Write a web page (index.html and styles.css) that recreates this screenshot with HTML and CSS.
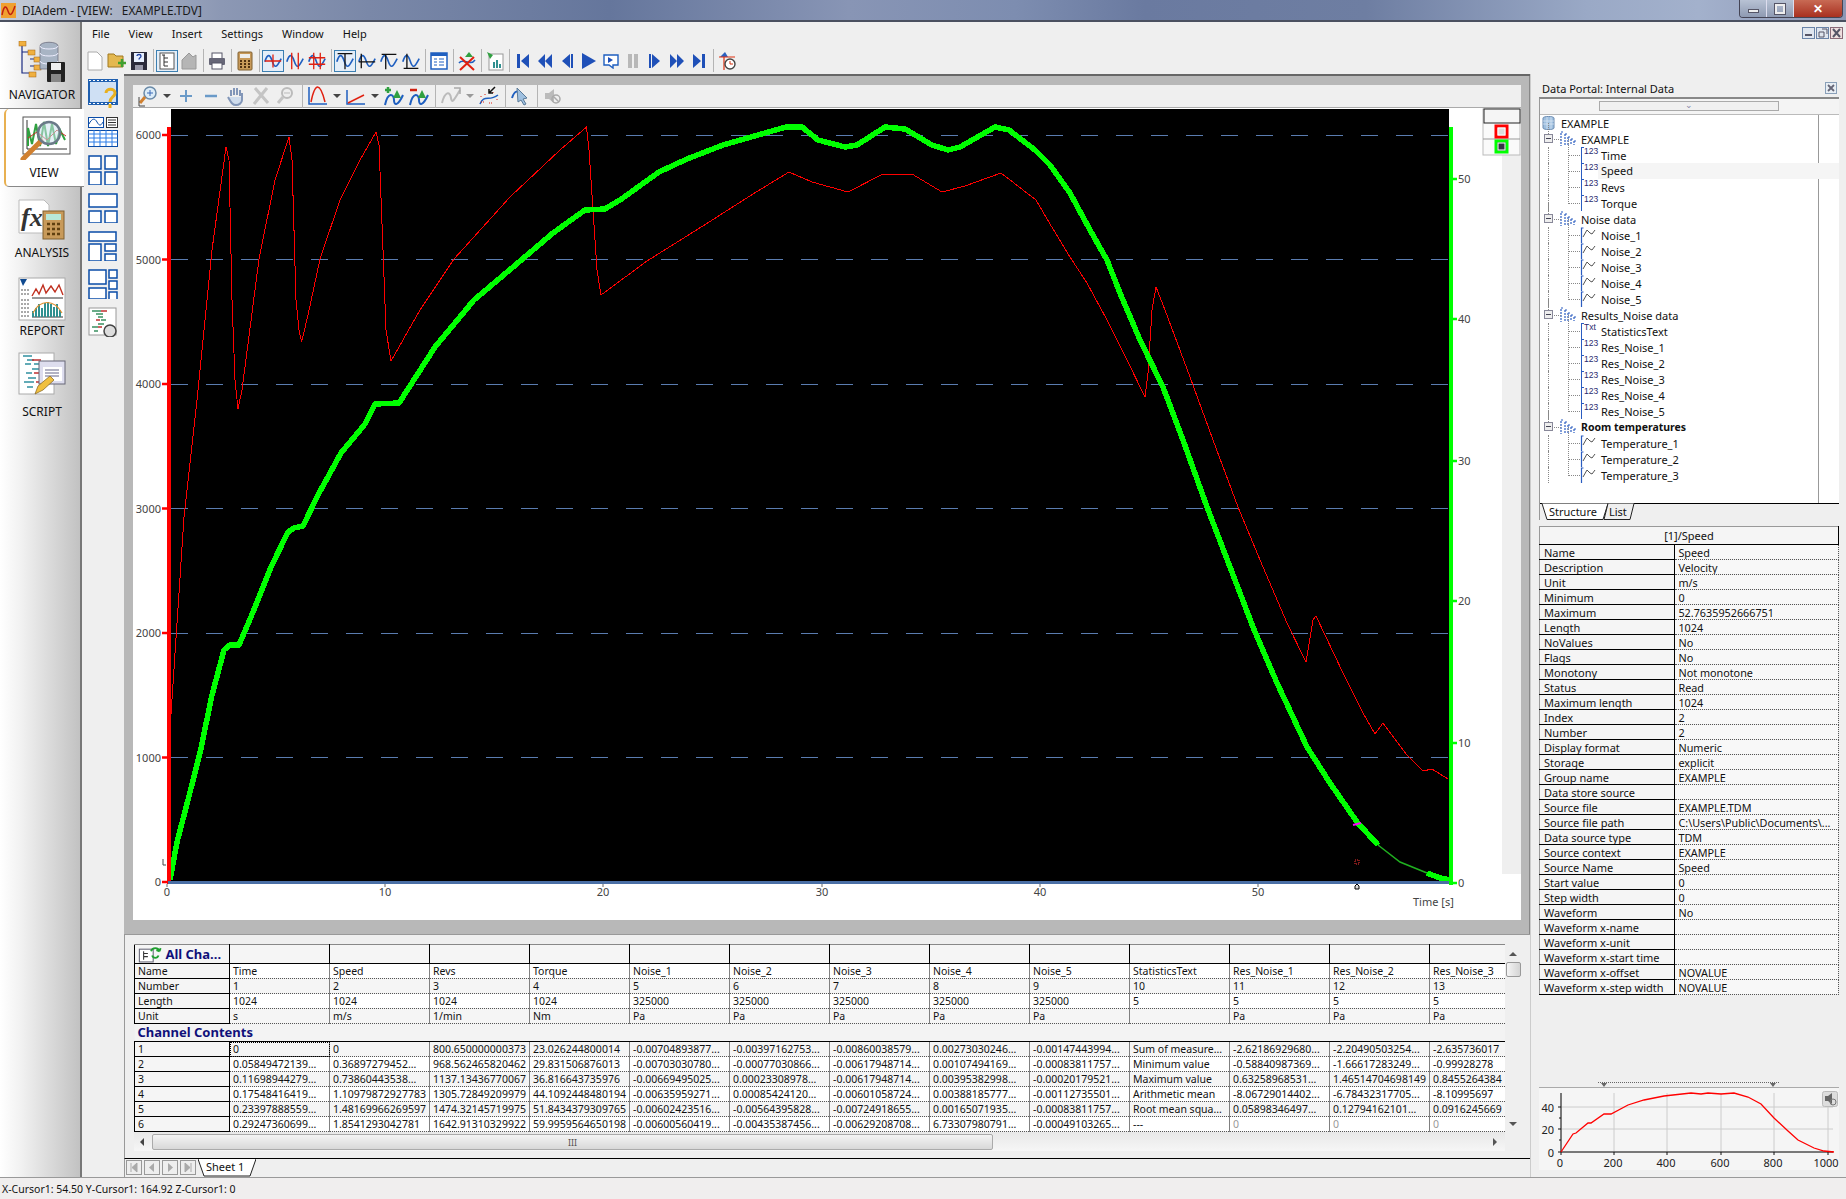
FILE: index.html
```html
<!DOCTYPE html>
<html>
<head>
    <title>DIAdem - [VIEW: EXAMPLE.TDV]</title>
    <link rel="stylesheet" href="styles.css">
</head>
<body>
    <svg class="defs" width="0" height="0">
        <symbol id="i-wave" viewBox="0 0 17 17">
            <path d="M3.500 1H1.500V16" fill="none" stroke="#2a5cc0" stroke-width="1.200"/>
            <path d="M3 10L7 3L10 6L12 7L15 3" fill="none" stroke="#555" stroke-width="1"/>
        </symbol>
        <symbol id="i-group" viewBox="0 0 16 16">
            <path d="M3 1H1V15M5 3V14M8 6V14M8 6H10M11 8V14M11 8H13M14 10V14M14 10H16M5 3H7" fill="none" stroke="#2a5cc0" stroke-width="1.200" stroke-dasharray="2 1"/>
        </symbol>
        <symbol id="i-wave-tool" viewBox="0 0 22 22">
            <path d="M1 12C4 2 7 2 10 11S15 20 21 8" fill="none" stroke="#1f5fc0" stroke-width="2"/>
        </symbol>
    </svg>

    <div class="titlebar">
        <svg class="app-icon" width="15" height="15" viewBox="0 0 15 15"><rect width="15" height="15" fill="#f0a030"/><path d="M1 12C3 2 5 2 7 8S11 12 14 3" fill="none" stroke="#c02010" stroke-width="1.500"/></svg>
        <span class="app-title">DIAdem - [VIEW:   EXAMPLE.TDV]</span>
        <div class="win-buttons">
            <div class="win-btn"><span class="win-min"></span></div>
            <div class="win-btn"><span class="win-max"></span></div>
            <div class="win-btn win-close">✕</div>
        </div>
    </div>

    <div class="app">
        <nav class="sidebar">
            <div class="nav-item nav-first">
                <svg width="48" height="44" viewBox="0 0 48 44">
                    <path d="M4 3V32H14M4 11H12M12 18H20M12 25H20" fill="none" stroke="#1a2a80" stroke-width="1.200"/>
                    <rect x="1" y="0" width="7" height="5" fill="#f0b040" stroke="#a06010" stroke-width=".5"/>
                    <rect x="10" y="9" width="7" height="5" fill="#f0b040" stroke="#a06010" stroke-width=".5"/>
                    <rect x="16" y="16" width="7" height="5" fill="#f0b040" stroke="#a06010" stroke-width=".5"/>
                    <rect x="16" y="24" width="7" height="5" fill="#f0b040" stroke="#a06010" stroke-width=".5"/>
                    <rect x="11" y="31" width="7" height="5" fill="#f0b040" stroke="#a06010" stroke-width=".5"/>
                    <path d="M22 5C22 0 40 0 40 5V28H22Z" fill="#a8b4c4" stroke="#667" stroke-width=".7"/>
                    <path d="M22 5C22 9 40 9 40 5M22 12C22 16 40 16 40 12M22 20C22 24 40 24 40 20" fill="none" stroke="#eef" stroke-width="1"/>
                    <rect x="29" y="21" width="18" height="20" rx="1" fill="#222"/>
                    <rect x="33" y="22" width="10" height="7" fill="#eee"/>
                    <rect x="33" y="33" width="10" height="8" fill="#888"/>
                </svg>
                <span>NAVIGATOR</span>
            </div>
            <div class="nav-item nav-active">
                <svg width="54" height="44" viewBox="0 0 54 44">
                    <rect x="6" y="1" width="47" height="37" fill="#fff" stroke="#555"/>
                    <path d="M10 4V33H50" fill="none" stroke="#333"/>
                    <path d="M11 30V12L15 28L19 8L23 30L27 6L31 30L35 8L39 28L43 14L48 24" fill="none" stroke="#30a040" stroke-width="2"/>
                    <path d="M11 22L20 16L30 24L40 14L49 20" fill="none" stroke="#c03020" stroke-width="1"/>
                    <path d="M24 25L6 43" stroke="#d08030" stroke-width="5" stroke-linecap="round"/>
                    <circle cx="32" cy="17" r="11" fill="#cfe4f0" fill-opacity=".55" stroke="#6a7a88" stroke-width="2.500"/>
                </svg>
                <span>VIEW</span>
            </div>
            <div class="nav-item">
                <svg width="48" height="44" viewBox="0 0 48 44">
                    <path d="M1 1H26L31 6V34H1Z" fill="#fff" stroke="#bbb"/>
                    <text x="3" y="27" class="ic-fx">fx</text>
                    <rect x="25" y="12" width="21" height="28" fill="#c89a5a" stroke="#806030"/>
                    <rect x="28" y="15" width="15" height="6" fill="#b8e8d8"/>
                    <path d="M29 25h3M34 25h3M39 25h3M29 30h3M34 30h3M39 30h3M29 35h3M34 35h3M39 35h3" stroke="#604010" stroke-width="2.500"/>
                </svg>
                <span>ANALYSIS</span>
            </div>
            <div class="nav-item">
                <svg width="48" height="44" viewBox="0 0 48 44">
                    <rect x="1" y="1" width="46" height="42" fill="#fff" stroke="#aaa"/>
                    <path d="M2 2H9L5 9Z" fill="#104a90"/>
                    <path d="M3 13H11M3 17H11M3 23H11M3 27H11M3 31H11M3 35H11M3 39H11" stroke="#555" stroke-dasharray="2 1"/>
                    <path d="M14 19L18 12L21 17L25 8L28 16L33 9L37 15L41 8L45 18" fill="none" stroke="#c03020" stroke-width="1.400"/>
                    <path d="M14 21H45M14 40H45" stroke="#333"/>
                    <path d="M15 40v-6M18 40v-9M21 40v-13M24 40v-9M27 40v-14M30 40v-15M33 40v-13M36 40v-10M39 40v-13M42 40v-7" stroke="#309090" stroke-width="2"/>
                    <path d="M15 36C22 22 36 22 44 36" fill="none" stroke="#e09030" stroke-width="1.200"/>
                </svg>
                <span>REPORT</span>
            </div>
            <div class="nav-item nav-script">
                <svg width="48" height="44" viewBox="0 0 48 44">
                    <rect x="1" y="1" width="35" height="41" fill="#fff" stroke="#aaa"/>
                    <path d="M5 4h9M9 8h7M16 12h12M7 12h6M14 17h10M8 21h6M10 26h8M6 30h10M9 35h6" stroke="#3090a0" stroke-width="1.500"/>
                    <path d="M14 8h9M16 21h8M18 30h6" stroke="#c03030" stroke-width="1.500"/>
                    <rect x="21" y="9" width="26" height="23" fill="#dde" stroke="#667"/>
                    <rect x="25" y="15" width="19" height="14" fill="#fff"/>
                    <path d="M27 18h14M27 21h14M27 24h14" stroke="#668"/>
                    <path d="M17 42L20 34L32 24L36 28L25 38Z" fill="#f0c040" stroke="#806020" stroke-width=".7"/>
                </svg>
                <span>SCRIPT</span>
            </div>
        </nav>

        <div class="workspace">
            <div class="menubar">
                <span>File</span><span>View</span><span>Insert</span><span>Settings</span><span>Window</span><span>Help</span>
                <div class="mdi-buttons">
                    <svg width="41" height="12" viewBox="0 0 41 12">
                        <rect x=".5" y=".5" width="12" height="11" fill="#dfe6ef" stroke="#6a84a8"/><path d="M3 8h7" stroke="#556" stroke-width="2"/>
                        <rect x="14.500" y=".5" width="12" height="11" fill="#dfe6ef" stroke="#6a84a8"/><path d="M17 5h5v5h-5zM20 2h5v5" fill="none" stroke="#556"/>
                        <rect x="28.500" y=".5" width="12" height="11" fill="#efdede" stroke="#8a6a78"/><path d="M31 2l7 8M38 2l-7 8" stroke="#556" stroke-width="2"/>
                    </svg>
                </div>
            </div>

            <div class="toolbar">
                <div class="tb"><svg width="16" height="20" viewBox="0 0 16 20"><path d="M1 1H10L15 6V19H1Z" fill="#fff" stroke="#aaa"/></svg></div>
                <div class="tb"><svg width="20" height="20" viewBox="0 0 20 20"><path d="M1 3H7L9 5H16V16H1Z" fill="#e4b850" stroke="#a07820"/><path d="M11 12h8M15 8v8" stroke="#40a030" stroke-width="2.500"/></svg></div>
                <div class="tb"><svg width="18" height="20" viewBox="0 0 18 20"><rect x="1" y="1" width="16" height="18" fill="#2a2a3a"/><rect x="4" y="2" width="10" height="9" fill="#e8f0ff"/><path d="M7 5C7 3 11 3 11 5C11 7 9 6.500 9 8.500" fill="none" stroke="#2040a0" stroke-width="1.300"/><rect x="5" y="14" width="8" height="5" fill="#99a"/></svg></div>
                <i class="tb-sep"></i>
                <div class="tb on"><svg width="16" height="18" viewBox="0 0 16 18"><rect x="1" y="1" width="14" height="16" fill="#fff" stroke="#555"/><path d="M5 3V14M5 6H9M5 10H9M5 14H9M3 3H6" stroke="#333"/></svg></div>
                <div class="tb"><svg width="18" height="20" viewBox="0 0 18 20"><path d="M2 18V9L9 2L13 6L16 4V18Z" fill="#b5b5b5" stroke="#999"/></svg></div>
                <i class="tb-sep"></i>
                <div class="tb"><svg width="18" height="18" viewBox="0 0 18 18"><rect x="4" y="1" width="10" height="6" fill="#fff" stroke="#556"/><rect x="1" y="6" width="16" height="7" rx="1" fill="#667"/><rect x="4" y="11" width="10" height="6" fill="#fff" stroke="#556"/></svg></div>
                <i class="tb-sep"></i>
                <div class="tb"><svg width="16" height="20" viewBox="0 0 16 20"><rect x="1" y="1" width="14" height="18" rx="1" fill="#c89a5a" stroke="#806030"/><rect x="3" y="3" width="10" height="4" fill="#eee"/><path d="M3 10h2M7 10h2M11 10h2M3 13h2M7 13h2M11 13h2M3 16h2M7 16h2M11 16h2" stroke="#503010" stroke-width="2"/></svg></div>
                <i class="tb-sep"></i>
                <div class="tb on"><svg width="18" height="18" viewBox="0 0 22 22"><use href="#i-wave-tool"/><path d="M11 3V19M1 11H21" stroke="#e02010" stroke-width="1.600"/></svg></div>
                <div class="tb"><svg width="18" height="18" viewBox="0 0 22 22"><use href="#i-wave-tool"/><path d="M7 1V21M15 1V21" stroke="#e02010" stroke-width="1.600"/></svg></div>
                <div class="tb"><svg width="18" height="18" viewBox="0 0 22 22"><use href="#i-wave-tool"/><path d="M7 1V21M15 1V21M1 7H21M1 15H21" stroke="#e02010" stroke-width="1.600"/></svg></div>
                <i class="tb-sep"></i>
                <div class="tb on"><svg width="18" height="18" viewBox="0 0 22 22"><use href="#i-wave-tool"/><path d="M2 2H20M11 2V21" stroke="#111" stroke-width="1.600"/></svg></div>
                <div class="tb"><svg width="18" height="18" viewBox="0 0 22 22"><use href="#i-wave-tool"/><path d="M4 2V20M1 12H21" stroke="#111" stroke-width="1.600"/></svg></div>
                <div class="tb"><svg width="18" height="18" viewBox="0 0 22 22"><use href="#i-wave-tool"/><path d="M2 3H20M7 3V21" stroke="#111" stroke-width="1.600"/></svg></div>
                <div class="tb"><svg width="18" height="18" viewBox="0 0 22 22"><use href="#i-wave-tool"/><path d="M2 20H20M6 2V20" stroke="#111" stroke-width="1.600"/></svg></div>
                <i class="tb-sep"></i>
                <div class="tb"><svg width="18" height="18" viewBox="0 0 18 18"><rect x="1" y="1" width="16" height="16" fill="#fff" stroke="#1f5fc0" stroke-width="1.500"/><rect x="1" y="1" width="16" height="3" fill="#1f5fc0"/><path d="M4 7h3M9 7h5M4 10h3M9 10h5M4 13h3M9 13h5" stroke="#1f5fc0"/></svg></div>
                <i class="tb-sep"></i>
                <div class="tb"><svg width="18" height="20" viewBox="0 0 18 20"><path d="M11 1l4 5h-8z" fill="#30a040"/><path d="M1 12C5 6 12 16 17 9" fill="none" stroke="#1f5fc0" stroke-width="1.500"/><path d="M2 6L16 19M16 6L2 19" stroke="#e02010" stroke-width="2"/></svg></div>
                <i class="tb-sep"></i>
                <div class="tb"><svg width="18" height="20" viewBox="0 0 18 20"><rect x="3" y="3" width="14" height="16" fill="#fff" stroke="#999"/><path d="M8 17v-6M11 17v-8M14 17v-4" stroke="#309090" stroke-width="2"/><path d="M1 1L7 4L4 8Z" fill="#30a040"/></svg></div>
                <i class="tb-sep"></i>
                <div class="tb"><svg width="14" height="16" viewBox="0 0 14 16"><path d="M1 1h3v14H1zM13 1v14L5 8z" class="ic-play"/></svg></div>
                <div class="tb"><svg width="16" height="16" viewBox="0 0 16 16"><path d="M8 1v14L1 8zM15 1v14L8 8z" class="ic-play"/></svg></div>
                <div class="tb"><svg width="14" height="16" viewBox="0 0 14 16"><path d="M10 1v14L2 8zM11 1h2v14h-2z" class="ic-play"/></svg></div>
                <div class="tb"><svg width="16" height="16" viewBox="0 0 16 16"><path d="M1 0v16L15 8z" class="ic-play"/></svg></div>
                <div class="tb"><svg width="16" height="16" viewBox="0 0 16 16"><path d="M1 2H15V12H10V15L6 12H1Z" fill="#fff" stroke="#1f5fc0" stroke-width="1.400"/><path d="M5 4v6l5-3z" class="ic-play"/></svg></div>
                <div class="tb"><svg width="12" height="16" viewBox="0 0 12 16"><path d="M1 1h4v14H1zM7 1h4v14H7z" fill="#b8b8b8"/></svg></div>
                <div class="tb"><svg width="14" height="16" viewBox="0 0 14 16"><path d="M1 1h2v14H1zM4 1v14L12 8z" class="ic-play"/></svg></div>
                <div class="tb"><svg width="16" height="16" viewBox="0 0 16 16"><path d="M1 1v14L8 8zM8 1v14L15 8z" class="ic-play"/></svg></div>
                <div class="tb"><svg width="14" height="16" viewBox="0 0 14 16"><path d="M1 1v14L9 8zM10 1h3v14h-3z" class="ic-play"/></svg></div>
                <i class="tb-sep"></i>
                <div class="tb"><svg width="18" height="20" viewBox="0 0 18 20"><path d="M2 6L7 1L10 6Z" fill="#2a60c0"/><path d="M6 6V19M1 6H17" stroke="#e03010" stroke-width="1.200"/><circle cx="12" cy="13" r="5" fill="#fff" stroke="#444" stroke-width="1.400"/><path d="M12 10v3h3" fill="none" stroke="#d03010"/></svg></div>
            </div>

            <div class="content">
                <div class="tool-col">
                    <svg width="30" height="30" viewBox="0 0 30 30"><rect x="0" y="0" width="30" height="26" fill="#2060b0"/><rect x="2" y="3" width="26" height="20" fill="#cfe0f4"/><path d="M1 1.500h28M1 24.500h28" stroke="#fff" stroke-dasharray="2 2"/><path d="M18 14C18 9 27 9 27 14C27 18 22 18 22 23" fill="none" stroke="#e8b020" stroke-width="3"/><rect x="20.500" y="25" width="3" height="4" fill="#e8b020"/></svg>
                    <svg width="30" height="30" viewBox="0 0 30 30"><rect x=".5" y=".5" width="15" height="10" fill="#fff" stroke="#0a4ca8"/><path d="M1 7C4 1 7 1 9 5S13 9 15 5" fill="none" stroke="#0a4ca8"/><rect x="18.500" y=".5" width="11" height="10" fill="#fff" stroke="#333"/><path d="M20 3h8M20 5.500h8M20 8h8" stroke="#333"/><rect x=".5" y="13.500" width="29" height="16" fill="#fff" stroke="#0a4ca8"/><path d="M.5 17h29M.5 21h29M.5 25h29M6 13v16M12 13v16M18 13v16M24 13v16" stroke="#2a7ce8"/></svg>
                    <svg width="30" height="30" viewBox="0 0 30 30"><g class="ic-pane"><rect x="1" y="1" width="12" height="13"/><rect x="17" y="1" width="12" height="13"/><rect x="1" y="17" width="12" height="13"/><rect x="17" y="17" width="12" height="13"/></g></svg>
                    <svg width="30" height="30" viewBox="0 0 30 30"><g class="ic-pane"><rect x="1" y="1" width="28" height="13"/><rect x="1" y="18" width="12" height="12"/><rect x="17" y="18" width="12" height="12"/></g></svg>
                    <svg width="30" height="30" viewBox="0 0 30 30"><g class="ic-pane"><rect x="1" y="1" width="27" height="9"/><rect x="1" y="13" width="12" height="17"/><rect x="17" y="13" width="11" height="7"/><rect x="17" y="23" width="11" height="7"/></g></svg>
                    <svg width="30" height="30" viewBox="0 0 30 30"><g class="ic-pane"><rect x="1" y="1" width="17" height="14"/><rect x="21" y="1" width="8" height="8"/><rect x="21" y="12" width="8" height="8"/><rect x="1" y="19" width="17" height="11"/><rect x="21" y="23" width="8" height="8"/></g></svg>
                    <svg width="30" height="30" viewBox="0 0 30 30"><rect x="1" y="1" width="27" height="27" fill="#fff" stroke="#999"/><path d="M4 4h9M8 7h7M10 10h5M13 13h5M10 17h6M4 20h6M6 24h4" stroke="#3a9060" stroke-width="1.300"/><path d="M13 4h6M12 13h-4M10 20h4" stroke="#c03030" stroke-width="1.300"/><circle cx="22" cy="24" r="6" fill="#ddd" stroke="#444" stroke-width="1.500"/></svg>
                </div>

                <div class="sheet">
                    <div class="chart-pane">
                        <div class="chart-tools">
                            <div class="ct"><svg width="22" height="22" viewBox="0 0 22 22"><circle cx="13" cy="8" r="6" fill="#dcecf8" stroke="#6a8aa8" stroke-width="1.500"/><path d="M13 5v6M10 8h6" stroke="#3a6ab8"/><path d="M8 12L3 18" stroke="#d08030" stroke-width="3"/><path d="M2 12v9M2 21h6" stroke="#444"/></svg></div>
                            <i class="dd"></i>
                            <div class="ct"><svg width="14" height="14" viewBox="0 0 14 14"><path d="M7 1V13M1 7H13" stroke="#6a9ac8" stroke-width="2"/></svg></div>
                            <div class="ct"><svg width="14" height="14" viewBox="0 0 14 14"><path d="M1 7H13" stroke="#6a9ac8" stroke-width="2.500"/></svg></div>
                            <div class="ct"><svg width="18" height="20" viewBox="0 0 18 20"><path d="M4 10V4M7 9V2M10 9V2M13 10V4M15 11V7L15 14C15 17 12 19 9 19C5 19 4 16 1 11" fill="#cfdcec" stroke="#8296b8" stroke-width="2"/></svg></div>
                            <div class="ct"><svg width="20" height="20" viewBox="0 0 20 20"><path d="M4 2L17 17M16 2L3 18" stroke="#c4c4c4" stroke-width="3"/></svg></div>
                            <div class="ct"><svg width="20" height="20" viewBox="0 0 20 20"><circle cx="11" cy="7" r="5" fill="#eee" stroke="#bbb" stroke-width="2"/><path d="M7 11L2 17" stroke="#c4c4c4" stroke-width="3"/><path d="M8 7h6" stroke="#bbb"/></svg></div>
                            <i class="tb-sep"></i>
                            <div class="ct"><svg width="20" height="20" viewBox="0 0 20 20"><path d="M1 1V18H19" fill="none" stroke="#1f5fc0" stroke-width="1.500"/><path d="M3 16C7 -4 12 -4 17 16" fill="none" stroke="#e02010" stroke-width="1.500"/></svg></div>
                            <i class="dd"></i>
                            <div class="ct"><svg width="20" height="20" viewBox="0 0 20 20"><path d="M1 4V18H19" fill="none" stroke="#1f5fc0" stroke-width="1.500"/><path d="M2 17L18 9" stroke="#e02010" stroke-width="1.500"/></svg></div>
                            <i class="dd"></i>
                            <div class="ct"><svg width="20" height="20" viewBox="0 0 20 20"><path d="M1 19C4 5 10 8 10 14S14 20 19 9" fill="none" stroke="#1f5fc0" stroke-width="2"/><path d="M9 12L13 4L17 12Z" fill="#30a040"/><path d="M1 4H7M4 1V7" stroke="#30a040" stroke-width="2.500"/></svg></div>
                            <div class="ct"><svg width="20" height="20" viewBox="0 0 20 20"><path d="M1 19C4 5 10 8 10 14S14 20 19 9" fill="none" stroke="#1f5fc0" stroke-width="2"/><path d="M9 12L13 4L17 12Z" fill="#30a040"/><path d="M1 4H8" stroke="#d02010" stroke-width="2.500"/></svg></div>
                            <i class="tb-sep"></i>
                            <div class="ct"><svg width="20" height="20" viewBox="0 0 20 20"><path d="M1 17C4 5 9 5 10 12S14 12 19 4" fill="none" stroke="#bbb" stroke-width="2"/><path d="M13 2H19V8" fill="none" stroke="#aaa" stroke-width="1.500"/></svg></div>
                            <i class="dd dd-off"></i>
                            <div class="ct"><svg width="20" height="20" viewBox="0 0 20 20"><path d="M1 18C5 8 10 16 19 9" fill="none" stroke="#1f5fc0" stroke-width="1.500"/><path d="M2 10v2M6 8v2M14 6v2M18 13v2M2 16h3M10 17h3" stroke="#e02010" stroke-dasharray="1 1"/><path d="M16 1L10 7M10 3V7H14" fill="none" stroke="#111" stroke-width="1.500"/></svg></div>
                            <i class="tb-sep"></i>
                            <div class="ct"><svg width="20" height="20" viewBox="0 0 20 20"><path d="M1 12C4 3 7 5 10 9" fill="none" stroke="#1f5fc0" stroke-width="2"/><path d="M6 2L16 12L12 13L15 18L13 19L10 14L7 16Z" fill="#9fc0e0" stroke="#5a7a98"/></svg></div>
                            <i class="tb-sep"></i>
                            <div class="ct"><svg width="18" height="18" viewBox="0 0 18 18"><path d="M1 6H5L10 2V16L5 12H1Z" fill="#bbb"/><circle cx="12" cy="12" r="4" fill="none" stroke="#aaa" stroke-width="1.500"/><path d="M9 9L15 15" stroke="#aaa" stroke-width="1.500"/></svg></div>
                        </div>

                        <svg class="chart" width="1388" height="812" viewBox="133 108 1388 812">
                            <rect x="171" y="109" width="1278" height="772" fill="#000"/>
                            <rect x="1502" y="154" width="19" height="720" fill="#efefef"/>
                            <g class="grid-line">
                                <path d="M171 135.500H1449M171 259.500H1449M171 384.500H1449M171 508.500H1449M171 633.500H1449M171 757.500H1449"/>
                            </g>

                            <polyline class="curve-red" points="168,760 184,517 197,400 212,250 226,147 229,160 232,300 235,380 238,409 242,390 259,259 275,180 289,137 292,160 296,300 299,330 301.600,342 308,315 320,259 340,200 360,160 376,132 379,145 383,250 386,330 391,361 420,310 454,259 510,197 560,150 586.500,127 589,150 593,210 597,270 601,295 647,261 706,224 753,194 789,172 812,182 848,192 883,174 912,174 942,192 965,186 1001,173 1036,200 1050,224 1070,257 1087,283 1107,320 1127,360 1145,397 1148,373 1152,310 1156,287 1165,310 1190,377 1213,440 1238,507 1263,567 1287,623 1306,662 1313,620 1316,616 1343,673 1363,713 1375,734 1383,723 1407,755 1423,771 1432,769 1448,779"/>
                            <polyline class="curve-green" points="170,880 177,842 188,800 200,753 212,695 224,650 230,645 239,645 253,612 271,567 288,532 294,528 303,526 318,495 341,453 365,424 375,404 399,403 435,347 474,300 506,273 553,233 585,210 605,209 620,200 659,172 687,159 723,145 786,127 802,127 818,140 845,147 857,145 885,127 905,129 932,145 948,150 960,147 995,127 1009,130 1035,150 1050,165 1070,193 1090,230 1107,260 1120,293 1140,340 1163,387 1183,440 1207,507 1230,567 1253,627 1277,683 1307,747 1330,783 1357,822 1378,845"/>
                            <polyline class="curve-green-thin" points="1378,845 1400,862 1427,873"/>
                            <polyline class="curve-green" points="1427,873 1440,878 1450,880"/>

                            <path d="M1353 825L1361 823" stroke="#f0f" stroke-width="2"/>
                            <rect x="1355" y="860" width="4" height="4" fill="none" stroke="#f33" stroke-dasharray="1 1"/>
                            <path d="M163 859V865H166" fill="none" stroke="#444"/>

                            <rect x="167" y="127" width="4" height="757" fill="#f00"/>
                            <rect x="1449" y="127" width="4" height="758" fill="#0f0"/>
                            <rect x="168" y="881" width="1281" height="3" fill="#4a6fa5"/>
                            <path d="M162 135H167M162 259.500H167M162 384H167M162 508.500H167M162 633H167M162 757.500H167M162 882H167" stroke="#f00" stroke-width="2.500"/>
                            <path d="M1453 179H1457M1453 319H1457M1453 461H1457M1453 601H1457M1453 743H1457M1453 883H1457" stroke="#0f0" stroke-width="2.500"/>
                            <path d="M167 884v3M385 884v3M603 884v3M822 884v3M1040 884v3M1258 884v3" stroke="#666"/>
                            <path d="M1355 889V886L1357 884L1359 886V889Z" fill="#ddd" stroke="#000"/>

                            <g class="axis-left">
                                <text x="161" y="139">6000</text>
                                <text x="161" y="264">5000</text>
                                <text x="161" y="388">4000</text>
                                <text x="161" y="513">3000</text>
                                <text x="161" y="637">2000</text>
                                <text x="161" y="762">1000</text>
                                <text x="161" y="886">0</text>
                            </g>
                            <g class="axis-right">
                                <text x="1458" y="183">50</text>
                                <text x="1458" y="323">40</text>
                                <text x="1458" y="465">30</text>
                                <text x="1458" y="605">20</text>
                                <text x="1458" y="747">10</text>
                                <text x="1458" y="887">0</text>
                            </g>
                            <g class="axis-bottom">
                                <text x="167" y="896">0</text>
                                <text x="385" y="896">10</text>
                                <text x="603" y="896">20</text>
                                <text x="822" y="896">30</text>
                                <text x="1040" y="896">40</text>
                                <text x="1258" y="896">50</text>
                            </g>
                            <text x="1413" y="906" class="axis-name">Time [s]</text>

                            <rect x="1483" y="109" width="37" height="46" fill="#fafafa" stroke="#bbb"/>
                            <rect x="1484" y="109" width="36" height="14" fill="#f5f5f5" stroke="#222"/>
                            <path d="M1483 139H1520" stroke="#999"/>
                            <rect x="1496" y="126" width="11" height="11" fill="#ddd" stroke="#f00" stroke-width="3"/>
                            <rect x="1496" y="141" width="11" height="11" fill="#334" stroke="#0f0" stroke-width="3"/>
                            <rect x="1498" y="143" width="7" height="7" fill="#334" stroke="#fff"/>
                            <rect x="1498" y="128" width="7" height="7" fill="#ddd" stroke="#fff"/>
                        </svg>
                    </div>

                    <div class="grid-pane">
                        <div class="grid-frame">
                            <div class="grid-clip">
                                <table class="grid">
                                    <colgroup><col class="col-head"><col span="13" class="col-data"></colgroup>
                                    <tr class="top-row">
                                        <th class="all-channels">
                                            <svg width="24" height="17" viewBox="0 0 22 16"><rect x="1" y="3" width="13" height="12" fill="#fff" stroke="#667"/><path d="M5 5V13M5 7H9M5 10H9" stroke="#333"/><path d="M12 5C13 1 19 1 20 5M20 5l-3-1M20 5l1-3M19 9C18 12 14 12 13 9" fill="none" stroke="#20a030" stroke-width="1.700"/></svg>
                                            All Cha...
                                        </th>
                                        <td></td><td></td><td></td><td></td><td></td><td></td><td></td><td></td><td></td><td></td><td></td><td></td><td></td>
                                    </tr>
                                    <tr>
                                        <th>Name</th><td>Time</td><td>Speed</td><td>Revs</td><td>Torque</td><td>Noise_1</td><td>Noise_2</td><td>Noise_3</td><td>Noise_4</td><td>Noise_5</td><td>StatisticsText</td><td>Res_Noise_1</td><td>Res_Noise_2</td><td>Res_Noise_3</td>
                                    </tr>
                                    <tr class="alt">
                                        <th>Number</th><td>1</td><td>2</td><td>3</td><td>4</td><td>5</td><td>6</td><td>7</td><td>8</td><td>9</td><td>10</td><td>11</td><td>12</td><td>13</td>
                                    </tr>
                                    <tr>
                                        <th>Length</th><td>1024</td><td>1024</td><td>1024</td><td>1024</td><td>325000</td><td>325000</td><td>325000</td><td>325000</td><td>325000</td><td>5</td><td>5</td><td>5</td><td>5</td>
                                    </tr>
                                    <tr class="alt">
                                        <th>Unit</th><td>s</td><td>m/s</td><td>1/min</td><td>Nm</td><td>Pa</td><td>Pa</td><td>Pa</td><td>Pa</td><td>Pa</td><td></td><td>Pa</td><td>Pa</td><td>Pa</td>
                                    </tr>
                                    <tr class="section-row">
                                        <th colspan="14">Channel Contents</th>
                                    </tr>
                                    <tr class="alt">
                                        <th>1</th><td class="current">0</td><td>0</td><td>800.650000000373</td><td>23.026244800014</td><td>-0.00704893877...</td><td>-0.00397162753...</td><td>-0.00860038579...</td><td>0.00273030246...</td><td>-0.00147443994...</td><td>Sum of measure...</td><td>-2.62186929680...</td><td>-2.20490503254...</td><td>-2.635736017</td>
                                    </tr>
                                    <tr>
                                        <th>2</th><td>0.05849472139...</td><td>0.36897279452...</td><td>968.562465820462</td><td>29.831506876013</td><td>-0.00703030780...</td><td>-0.00077030866...</td><td>-0.00617948714...</td><td>0.00107494169...</td><td>-0.00083811757...</td><td>Minimum value</td><td>-0.58840987369...</td><td>-1.66617283249...</td><td>-0.99928278</td>
                                    </tr>
                                    <tr class="alt">
                                        <th>3</th><td>0.11698944279...</td><td>0.73860443538...</td><td>1137.13436770067</td><td>36.816643735976</td><td>-0.00669495025...</td><td>0.00023308978...</td><td>-0.00617948714...</td><td>0.00395382998...</td><td>-0.00020179521...</td><td>Maximum value</td><td>0.63258968531...</td><td>1.46514704698149</td><td>0.8455264384</td>
                                    </tr>
                                    <tr>
                                        <th>4</th><td>0.17548416419...</td><td>1.10979872927783</td><td>1305.72849209979</td><td>44.1092448480194</td><td>-0.00635959271...</td><td>0.00085424120...</td><td>-0.00601058724...</td><td>0.00388185777...</td><td>-0.00112735501...</td><td>Arithmetic mean</td><td>-8.06729014402...</td><td>-6.78432317705...</td><td>-8.10995697</td>
                                    </tr>
                                    <tr class="alt">
                                        <th>5</th><td>0.23397888559...</td><td>1.48169966269597</td><td>1474.32145719975</td><td>51.8434379309765</td><td>-0.00602423516...</td><td>-0.00564395828...</td><td>-0.00724918655...</td><td>0.00165071935...</td><td>-0.00083811757...</td><td>Root mean squa...</td><td>0.05898346497...</td><td>0.12794162101...</td><td>0.0916245669</td>
                                    </tr>
                                    <tr>
                                        <th>6</th><td>0.29247360699...</td><td>1.8541293042781</td><td>1642.91310329922</td><td>59.9959564650198</td><td>-0.00600560419...</td><td>-0.00435387456...</td><td>-0.00629208708...</td><td>6.73307980791...</td><td>-0.00049103265...</td><td>---</td><td class="muted">0</td><td class="muted">0</td><td class="muted">0</td>
                                    </tr>
                                </table>
                                <div class="hscroll">
                                    <i class="arrow-left"></i>
                                    <div class="hthumb">III</div>
                                    <i class="arrow-right"></i>
                                </div>
                            </div>
                            <div class="vscroll">
                                <i class="arrow-up"></i>
                                <div class="vthumb"></div>
                                <i class="arrow-down"></i>
                            </div>
                        </div>
                    </div>

                    <div class="sheet-tabs">
                        <div class="nav-btns">
                            <svg width="16" height="15" viewBox="0 0 16 15"><rect x=".5" y=".5" width="15" height="14" fill="#eee" stroke="#999"/><path d="M5 3V12M11 3V12L6 7.500Z" fill="#aaa" stroke="#aaa"/></svg>
                            <svg width="16" height="15" viewBox="0 0 16 15"><rect x=".5" y=".5" width="15" height="14" fill="#eee" stroke="#999"/><path d="M10 3V12L5 7.500Z" fill="#aaa"/></svg>
                            <svg width="16" height="15" viewBox="0 0 16 15"><rect x=".5" y=".5" width="15" height="14" fill="#eee" stroke="#999"/><path d="M6 3V12L11 7.500Z" fill="#aaa"/></svg>
                            <svg width="16" height="15" viewBox="0 0 16 15"><rect x=".5" y=".5" width="15" height="14" fill="#eee" stroke="#999"/><path d="M11 3V12M5 3V12L10 7.500Z" fill="#aaa" stroke="#aaa"/></svg>
                        </div>
                        <div class="sheet-tab">
                            <svg width="58" height="18" viewBox="0 0 58 18"><path d="M0 0L6 17H52L58 0" fill="#fff" stroke="#222"/></svg>
                            <span>Sheet 1</span>
                        </div>
                    </div>
                </div>

                <aside class="portal">
                    <div class="portal-title">
                        <span>Data Portal: Internal Data</span>
                        <svg width="12" height="12" viewBox="0 0 12 12"><rect x=".5" y=".5" width="11" height="11" fill="#e8eef4" stroke="#8aa0b8"/><path d="M3 3L9 9M9 3L3 9" stroke="#667" stroke-width="1.800"/></svg>
                    </div>
                    <div class="tree-box">
                        <div class="tree-head"><div class="tree-handle">⌄</div></div>
                        <div class="tree">
                            <div class="tree-root">
                                <svg width="13" height="14" viewBox="0 0 13 14"><path d="M1 2C1 0 12 0 12 2V12C12 14 1 14 1 12Z" fill="#9fc0e0" stroke="#6a8ab0"/><path d="M1 5H12M1 8H12M5 1V13M9 1V13" stroke="#dfe9f5" stroke-width=".7"/></svg>
                                <span>EXAMPLE</span>
                            </div>
                            <div class="t-group"><i class="t-toggle"></i><svg width="16" height="16"><use href="#i-group"/></svg><span>EXAMPLE</span></div>
                            <div class="t-leaf"><b class="t-kind">123</b><span>Time</span></div>
                            <div class="t-leaf t-selected"><b class="t-kind">123</b><span>Speed</span></div>
                            <div class="t-leaf"><b class="t-kind">123</b><span>Revs</span></div>
                            <div class="t-leaf"><b class="t-kind">123</b><span>Torque</span></div>
                            <div class="t-group"><i class="t-toggle"></i><svg width="16" height="16"><use href="#i-group"/></svg><span>Noise data</span></div>
                            <div class="t-leaf"><svg width="17" height="17"><use href="#i-wave"/></svg><span>Noise_1</span></div>
                            <div class="t-leaf"><svg width="17" height="17"><use href="#i-wave"/></svg><span>Noise_2</span></div>
                            <div class="t-leaf"><svg width="17" height="17"><use href="#i-wave"/></svg><span>Noise_3</span></div>
                            <div class="t-leaf"><svg width="17" height="17"><use href="#i-wave"/></svg><span>Noise_4</span></div>
                            <div class="t-leaf"><svg width="17" height="17"><use href="#i-wave"/></svg><span>Noise_5</span></div>
                            <div class="t-group"><i class="t-toggle"></i><svg width="16" height="16"><use href="#i-group"/></svg><span>Results_Noise data</span></div>
                            <div class="t-leaf"><b class="t-kind">Txt</b><span>StatisticsText</span></div>
                            <div class="t-leaf"><b class="t-kind">123</b><span>Res_Noise_1</span></div>
                            <div class="t-leaf"><b class="t-kind">123</b><span>Res_Noise_2</span></div>
                            <div class="t-leaf"><b class="t-kind">123</b><span>Res_Noise_3</span></div>
                            <div class="t-leaf"><b class="t-kind">123</b><span>Res_Noise_4</span></div>
                            <div class="t-leaf"><b class="t-kind">123</b><span>Res_Noise_5</span></div>
                            <div class="t-group t-bold"><i class="t-toggle"></i><svg width="16" height="16"><use href="#i-group"/></svg><span>Room temperatures</span></div>
                            <div class="t-leaf"><svg width="17" height="17"><use href="#i-wave"/></svg><span>Temperature_1</span></div>
                            <div class="t-leaf"><svg width="17" height="17"><use href="#i-wave"/></svg><span>Temperature_2</span></div>
                            <div class="t-leaf"><svg width="17" height="17"><use href="#i-wave"/></svg><span>Temperature_3</span></div>
                        </div>
                        <svg class="tree-tabs" width="299" height="17" viewBox="0 0 299 17">
                            <path d="M0 .5H299" stroke="#000"/>
                            <path d="M2 .5L7 16.500H63L68 .5" fill="#fff" stroke="#222"/>
                            <path d="M68 .5L64 16.500H90L94 .5" fill="#efefef" stroke="#222"/>
                            <text x="9" y="12.500">Structure</text>
                            <text x="69" y="12.500">List</text>
                        </svg>
                    </div>

                    <table class="props">
                        <colgroup><col class="col-prop"><col class="col-val"></colgroup>
                        <tr class="props-head"><th colspan="2">[1]/Speed</th></tr>
                        <tr><th>Name</th><td>Speed</td></tr>
                        <tr><th>Description</th><td>Velocity</td></tr>
                        <tr><th>Unit</th><td>m/s</td></tr>
                        <tr><th>Minimum</th><td>0</td></tr>
                        <tr><th>Maximum</th><td>52.7635952666751</td></tr>
                        <tr><th>Length</th><td>1024</td></tr>
                        <tr><th>NoValues</th><td>No</td></tr>
                        <tr><th>Flags</th><td>No</td></tr>
                        <tr><th>Monotony</th><td>Not monotone</td></tr>
                        <tr><th>Status</th><td>Read</td></tr>
                        <tr><th>Maximum length</th><td>1024</td></tr>
                        <tr><th>Index</th><td>2</td></tr>
                        <tr><th>Number</th><td>2</td></tr>
                        <tr><th>Display format</th><td>Numeric</td></tr>
                        <tr><th>Storage</th><td>explicit</td></tr>
                        <tr><th>Group name</th><td>EXAMPLE</td></tr>
                        <tr><th>Data store source</th><td></td></tr>
                        <tr><th>Source file</th><td>EXAMPLE.TDM</td></tr>
                        <tr><th>Source file path</th><td>C:\Users\Public\Documents\...</td></tr>
                        <tr><th>Data source type</th><td>TDM</td></tr>
                        <tr><th>Source context</th><td>EXAMPLE</td></tr>
                        <tr><th>Source Name</th><td>Speed</td></tr>
                        <tr><th>Start value</th><td>0</td></tr>
                        <tr><th>Step width</th><td>0</td></tr>
                        <tr><th>Waveform</th><td>No</td></tr>
                        <tr><th>Waveform x-name</th><td></td></tr>
                        <tr><th>Waveform x-unit</th><td></td></tr>
                        <tr><th>Waveform x-start time</th><td></td></tr>
                        <tr><th>Waveform x-offset</th><td>NOVALUE</td></tr>
                        <tr><th>Waveform x-step width</th><td>NOVALUE</td></tr>
                    </table>

                    <div class="mini-split"><i></i><i></i></div>

                    <div class="mini-plot">
                        <svg width="300" height="83" viewBox="1538 1087 300 83">
                            <path d="M1560 1092V1151H1832M1613 1092V1151M1666 1092V1151M1720 1092V1151M1773 1092V1151M1827 1092V1151M1560 1106H1832M1560 1128H1832" fill="none" stroke="#ccc"/>
                            <path d="M1560 1092V1151H1832" fill="none" stroke="#111"/>
                            <path d="M1557 1106H1560M1557 1128H1560M1557 1151H1560M1558 1117H1560M1558 1139H1560M1560 1151V1154M1613 1151V1154M1666 1151V1154M1720 1151V1154M1773 1151V1154M1827 1151V1154" stroke="#111"/>
                            <polyline points="1560,1151 1572,1133 1575,1132 1587,1122 1590,1122 1603,1113 1610,1113 1627,1104 1643,1099 1663,1095 1690,1092 1700,1093 1707,1092 1720,1093 1733,1092 1747,1096 1760,1103 1773,1117 1787,1130 1797,1139 1813,1147 1823,1150 1833,1151" fill="none" stroke="#f00" stroke-width="1.300"/>
                            <g class="mini-y">
                                <text x="1553" y="1111">40</text>
                                <text x="1553" y="1133">20</text>
                                <text x="1553" y="1156">0</text>
                            </g>
                            <g class="mini-x">
                                <text x="1559" y="1166">0</text>
                                <text x="1612" y="1166">200</text>
                                <text x="1665" y="1166">400</text>
                                <text x="1719" y="1166">600</text>
                                <text x="1772" y="1166">800</text>
                                <text x="1825" y="1166">1000</text>
                            </g>
                            <rect x="1821.500" y="1090.500" width="15" height="15" rx="2" fill="#ddd" stroke="#bbb"/>
                            <path d="M1824 1095H1827L1831 1092V1103L1827 1100H1824Z" fill="#666"/>
                            <circle cx="1832" cy="1101" r="3" fill="none" stroke="#777"/>
                        </svg>
                    </div>
                </aside>
            </div>
        </div>
    </div>

    <div class="statusbar">X-Cursor1: 54.50 Y-Cursor1: 164.92 Z-Cursor1: 0</div>
</body>
</html>
```

FILE: styles.css
```css
* {
    box-sizing: border-box;
}
html, body {
    margin: 0;
    padding: 0;
}
body {
    width: 1846px;
    height: 1199px;
    overflow: hidden;
    font-family: "Noto Sans", sans-serif;
    font-size: 11px;
    color: #111;
    background: #efefef;
    display: flex;
    flex-direction: column;
}
svg {
    display: block;
    flex: none;
}
.defs {
    position: absolute;
}
.ic-fx {
    font-family: "Liberation Serif", serif;
    font-style: italic;
    font-weight: bold;
    font-size: 26px;
    fill: #333;
}
.ic-play {
    fill: #1f50b8;
}
.ic-pane rect {
    fill: #fff;
    stroke: #0a4ca8;
    stroke-width: 1.5;
}

/* title bar */
.titlebar {
    height: 22px;
    flex: none;
    display: flex;
    align-items: center;
    border-bottom: 2px solid #4a5060;
    background: linear-gradient(90deg, #c6ccd8 0%, #aab3c6 6%, #8c98b4 12%, #7a88a8 20%, #65769c 33%, #8895b5 46%, #7d8db0 55%, #6a7aa0 62%, #6e7ea2 74%, #9aa9c6 86%, #a3b1cc 92%, #8d97b5 100%);
}
.app-icon {
    margin-left: 1px;
}
.app-title {
    margin-left: 6px;
    font-size: 11.800px;
    color: #1a1a1a;
    white-space: pre;
}
.win-buttons {
    margin-left: auto;
    margin-right: 3px;
    display: flex;
    height: 18px;
    align-self: flex-start;
    border: 1px solid #445;
    border-top: none;
    border-radius: 0 0 4px 4px;
    overflow: hidden;
}
.win-btn {
    width: 27px;
    display: flex;
    align-items: center;
    justify-content: center;
    background: linear-gradient(#b8c2d4, #8e9ab2);
    border-right: 1px solid #dde;
}
.win-close {
    width: 48px;
    border-right: none;
    color: #fff;
    font-weight: bold;
    font-size: 12px;
    background: linear-gradient(#c86a54, #a83020);
}
.win-min {
    width: 11px;
    height: 4px;
    margin-top: 5px;
    background: #eee;
    border: 1px solid #556;
}
.win-max {
    width: 10px;
    height: 10px;
    border: 2px solid #eee;
    outline: 1px solid #556;
}

.app {
    flex: 1;
    display: flex;
    min-height: 0;
}

/* left navigator strip */
.sidebar {
    width: 82px;
    flex: none;
    border-right: 2px solid #777;
    background: linear-gradient(90deg, #fff 0%, #f2f2f2 25%, #c2c2c2 100%);
    display: flex;
    flex-direction: column;
}
.nav-item {
    height: 78px;
    padding: 12px 0 0 4px;
    display: flex;
    flex-direction: column;
    align-items: center;
    font-size: 12px;
}
.nav-item svg {
    margin-bottom: 3px;
}
.nav-item span {
    line-height: 14px;
}
.nav-first {
    height: 87px;
    padding-top: 19px;
    border-bottom: 1px solid #888;
}
.nav-active {
    width: 80px;
    margin-left: 4px;
    margin-right: -2px;
    padding: 7px 2px 0 0;
    background: #fff;
    border-left: 2px solid #e8b050;
    border-bottom: 1px solid #888;
    border-radius: 5px 0 0 5px;
}
.nav-active svg {
    margin-bottom: 6px;
}
.nav-script {
    padding-top: 9px;
}
.nav-script svg {
    margin-bottom: 9px;
}

.workspace {
    flex: 1;
    display: flex;
    flex-direction: column;
    min-width: 0;
}
.menubar {
    height: 25px;
    flex: none;
    display: flex;
    align-items: center;
    padding: 0 0 3px 10px;
    gap: 19px;
    font-size: 11px;
}
.mdi-buttons {
    margin-left: auto;
    margin-right: 3px;
    margin-top: -1px;
}

/* main toolbar */
.toolbar {
    height: 27px;
    flex: none;
    display: flex;
    align-items: center;
    padding-left: 2px;
}
.tb {
    width: 22px;
    height: 22px;
    display: flex;
    align-items: center;
    justify-content: center;
}
.tb.on {
    border: 1px solid #3c7fb1;
    background: #e4eef8;
}
.tb-sep {
    width: 1px;
    height: 23px;
    margin: 0 2px 0 3px;
    background: #b4b4b4;
}

.content {
    flex: 1;
    display: flex;
    min-height: 0;
}
.tool-col {
    width: 42px;
    flex: none;
    padding: 5px 0 0 6px;
    display: flex;
    flex-direction: column;
    gap: 8px;
}

/* center sheet */
.sheet {
    width: 1406px;
    flex: none;
    display: flex;
    flex-direction: column;
    border-top: 2px solid #666;
}
.chart-pane {
    height: 858px;
    flex: none;
    padding: 9px 9px 14px;
    background: #b8b8b8;
    border-right: 1px solid #888;
}
.chart-tools {
    width: 1388px;
    height: 23px;
    display: flex;
    align-items: center;
    gap: 1px;
    padding-left: 3px;
    background: #efefef;
    border-bottom: 1px solid #aaa;
}
.ct {
    width: 24px;
    height: 22px;
    display: flex;
    align-items: center;
    justify-content: center;
}
.dd {
    height: 0;
    width: 0;
    border-style: solid;
    border-width: 4px 4px 0;
    border-color: #444 transparent transparent;
    margin: 0 2px;
}
.dd-off {
    border-color: #999 transparent transparent;
}
.chart {
    background: #fff;
}
.grid-line path {
    fill: none;
    stroke: #5a7cb0;
    stroke-width: 1;
    stroke-dasharray: 17 18;
    shape-rendering: crispEdges;
}
.curve-red {
    fill: none;
    stroke: #f00;
    stroke-width: 1;
    shape-rendering: crispEdges;
}
.curve-green {
    fill: none;
    stroke: #0f0;
    stroke-width: 5.500;
    stroke-linejoin: round;
    shape-rendering: crispEdges;
}
.curve-green-thin {
    fill: none;
    stroke: #20b020;
    stroke-width: 1.500;
}
.chart text {
    font-size: 11px;
    fill: #444;
}
.axis-left text {
    text-anchor: end;
}
.axis-bottom text {
    text-anchor: middle;
}

/* channel grid */
.grid-pane {
    height: 224px;
    flex: none;
    padding: 9px 10px 7px 9px;
    border-top: 1px solid #999;
    border-left: 1px solid #999;
}
.grid-frame {
    width: 1387px;
    height: 207px;
    display: flex;
}
.grid-clip {
    width: 1371px;
    flex: none;
    overflow: hidden;
    background: #f0f0f0;
}
.grid {
    width: 1395px;
    table-layout: fixed;
    border-collapse: collapse;
    font-size: 10.500px;
    line-height: 13px;
}
.col-head {
    width: 95px;
}
.col-data {
    width: 100px;
}
.grid th, .grid td {
    height: 15px;
    padding: 0 3px;
    overflow: hidden;
    white-space: nowrap;
    text-align: left;
    font-weight: normal;
}
.grid th {
    background: #f5f5f5;
    border: 1px solid #000;
}
.grid td {
    background: #fff;
    border-right: 1px solid #808080;
    border-bottom: 1px dotted #555;
}
.grid .alt td {
    background: #f5f5f5;
}
.grid .top-row th, .grid .top-row td {
    height: 19px;
    line-height: 12px;
    background: #f5f5f5;
    border: 1px solid #000;
    border-top-color: #888;
}
.all-channels {
    font-size: 13px;
    color: #10107a;
}
.grid .all-channels {
    font-weight: bold;
}
.all-channels svg {
    display: inline-block;
    vertical-align: -4px;
}
.grid .section-row th {
    height: 18px;
    font-size: 13px;
    font-weight: bold;
    color: #10107a;
    background: #f3f3f3;
    border-width: 0 0 1px;
}
.grid .current {
    outline: 1px dotted #000;
    outline-offset: -1px;
}
.grid .muted {
    color: #999;
}
.hscroll {
    height: 19px;
    display: flex;
    align-items: center;
    background: linear-gradient(#e8e8e8, #f6f6f6);
    padding: 0 6px;
}
.hthumb {
    width: 841px;
    height: 16px;
    margin-left: 8px;
    text-align: center;
    line-height: 16px;
    font-size: 9px;
    color: #555;
    border: 1px solid #aaa;
    border-radius: 2px;
    background: linear-gradient(#f4f4f4, #d8d8d8);
}
.arrow-left {
    border-style: solid;
    border-width: 4px 4px 4px 0;
    border-color: transparent #444 transparent transparent;
}
.arrow-right {
    margin-left: auto;
    margin-right: 2px;
    border-style: solid;
    border-width: 4px 0 4px 4px;
    border-color: transparent transparent transparent #555;
}
.vscroll {
    width: 16px;
    flex: none;
    height: 188px;
    display: flex;
    flex-direction: column;
    align-items: center;
    padding-top: 8px;
    background: #efefef;
}
.arrow-up {
    border-style: solid;
    border-width: 0 4px 4px;
    border-color: transparent transparent #555;
}
.arrow-down {
    margin-top: auto;
    margin-bottom: 6px;
    border-style: solid;
    border-width: 4px 4px 0;
    border-color: #555 transparent transparent;
}
.vthumb {
    width: 15px;
    height: 15px;
    margin-top: 6px;
    border: 1px solid #999;
    border-radius: 2px;
    background: linear-gradient(90deg, #f4f4f4, #d4d4d4);
}

/* sheet tabs */
.sheet-tabs {
    flex: 1;
    display: flex;
    align-items: flex-start;
    gap: 2px;
    padding-left: 1px;
    border-top: 1px solid #000;
    border-left: 1px solid #999;
}
.nav-btns {
    display: flex;
    gap: 2px;
    padding-top: 1px;
}
.sheet-tab {
    position: relative;
    width: 58px;
    height: 18px;
    font-size: 11px;
}
.sheet-tab span {
    position: absolute;
    left: 8px;
    top: 0;
    line-height: 16px;
}

/* data portal */
.portal {
    flex: 1;
    min-width: 0;
    padding-left: 8px;
    display: flex;
    flex-direction: column;
    border-left: 1px solid #ccc;
}
.portal-title {
    height: 23px;
    flex: none;
    width: 298px;
    display: flex;
    align-items: center;
    justify-content: space-between;
    padding: 5px 0 0 3px;
}
.tree-box {
    width: 300px;
    height: 423px;
    flex: none;
    display: flex;
    flex-direction: column;
    border-top: 2px solid #888;
    border-left: 1px solid #999;
}
.tree-head {
    height: 16px;
    flex: none;
    padding: 2px 0 0 59px;
    border-bottom: 1px solid #bbb;
    background: #f4f4f4;
}
.tree-handle {
    width: 180px;
    height: 10px;
    border: 1px solid #aaa;
    background: #f0f0f0;
    text-align: center;
    font-size: 9px;
    line-height: 5px;
    color: #88a;
}
.tree {
    height: 388px;
    flex: none;
    background: linear-gradient(90deg, #fff 278px, #999 278px, #999 279px, #fff 279px);
}
.tree-root, .t-group, .t-leaf {
    position: relative;
    height: 16px;
    display: flex;
    align-items: center;
    gap: 5px;
}
.tree-root {
    padding-left: 2px;
    gap: 6px;
}
.t-group {
    padding-left: 20px;
}
.t-leaf {
    padding-left: 40px;
    gap: 4px;
}
.t-group::before, .t-leaf::before {
    content: "";
    position: absolute;
    top: -8px;
    height: 16px;
    border-left: 1px dotted #888;
    border-bottom: 1px dotted #888;
}
.t-group::before {
    left: 8px;
    width: 12px;
}
.t-leaf::before {
    left: 28px;
    width: 11px;
}
.t-leaf::after {
    content: "";
    position: absolute;
    left: 8px;
    top: 0;
    height: 16px;
    border-left: 1px dotted #888;
}
.t-toggle {
    position: absolute;
    left: 4px;
    top: 3px;
    width: 9px;
    height: 9px;
    border: 1px solid #889;
    background: linear-gradient(#445, #445) center / 5px 1px no-repeat, #eee;
}
.t-kind {
    width: 17px;
    height: 16px;
    flex: none;
    padding-left: 4px;
    font-family: "Liberation Sans", sans-serif;
    font-size: 8.500px;
    font-weight: normal;
    line-height: 9px;
    color: #2a2a70;
    background: linear-gradient(#2a5cc0, #2a5cc0) 1px 0 / 3px 1px no-repeat, linear-gradient(#2a5cc0, #2a5cc0) 1px 0 / 1px 100% no-repeat;
}
.t-selected span {
    flex: 1;
    align-self: stretch;
    line-height: 16px;
    margin-left: -3px;
    padding-left: 3px;
    background: #f5f5f5;
}
.t-bold span {
    font-weight: bold;
    font-size: 10.500px;
}
.tree-tabs {
    flex: none;
}
.tree-tabs text {
    font-size: 11px;
    fill: #111;
}

.props {
    width: 300px;
    margin-top: 6px;
    table-layout: fixed;
    border-collapse: collapse;
    flex: none;
}
.col-prop {
    width: 135px;
}
.col-val {
    width: 163px;
}
.props th, .props td {
    height: 15px;
    padding: 0 4px;
    line-height: 13px;
    text-align: left;
    font-weight: normal;
    white-space: nowrap;
    overflow: hidden;
}
.props th {
    background: #f5f5f5;
    border: 1px solid #000;
    border-left-color: #999;
}
.props td {
    font-size: 10.800px;
    padding-left: 3px;
    background: #f8f8f8;
    border-right: 1px dotted #555;
    border-bottom: 1px dotted #555;
}
.props-head th {
    height: 18px;
    text-align: center;
    border-top-color: #999;
}
.mini-split {
    width: 181px;
    height: 5px;
    margin: auto 0 0 59px;
    display: flex;
    justify-content: space-between;
    border-top: 1px dotted #666;
    padding: 0 3px;
}
.mini-split i {
    border-style: solid;
    border-width: 4px 3px 0;
    border-color: #666 transparent transparent;
}
.mini-plot {
    width: 300px;
    height: 83px;
    margin-bottom: 7px;
    flex: none;
    background: #f5f5f5;
    border-top: 1px solid #aaa;
}
.mini-plot text {
    font-size: 11px;
    fill: #222;
}
.mini-y text {
    text-anchor: end;
}
.mini-x text {
    text-anchor: middle;
}

.statusbar {
    height: 22px;
    flex: none;
    padding-left: 2px;
    line-height: 22px;
    font-size: 10.500px;
    background: #f0eeee;
    border-top: 1px solid #999;
}
```
